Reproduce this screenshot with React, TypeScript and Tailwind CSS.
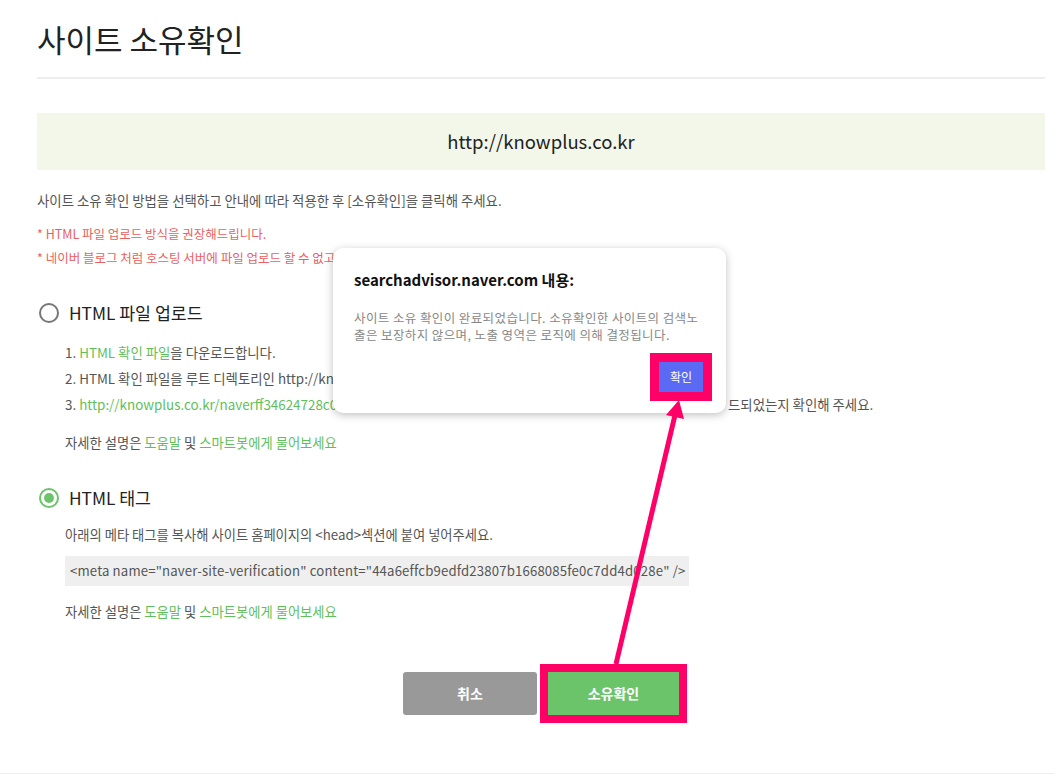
const font = { fontFamily: '"Noto Sans CJK KR", "Noto Sans", sans-serif' };

const Radio = ({ checked }: { checked?: boolean }) =>
  checked ? (
    <span className="ml-[2px] flex h-[20px] w-[20px] items-center justify-center rounded-full border-2 border-[#6cc46a]">
      <span className="h-[10px] w-[10px] rounded-full bg-[#6cc46a]" />
    </span>
  ) : (
    <span className="ml-[2px] h-[20px] w-[20px] rounded-full border-2 border-[#777]" />
  );

const HelpLine = () => (
  <p className="text-[13.3px] leading-[20px] text-[#555]">
    자세한 설명은 <span className="text-[#5fbf5a]">도움말</span> 및{" "}
    <span className="text-[#5fbf5a]">스마트봇에게 물어보세요</span>
  </p>
);

export default function App() {
  return (
    <div
      className="relative h-[774px] w-[1054px] overflow-hidden border-b border-[#eee] bg-white pl-[37px] pr-[9px]"
      style={font}
    >
      <h1 className="pt-[18px] text-[31px] leading-[42px] font-normal text-[#222]">사이트 소유확인</h1>
      <div className="mt-[17px] border-t-2 border-[#eee]" />

      <div className="mt-[34px] flex h-[57px] items-center justify-center bg-[#f3f7ea] text-[18.5px] text-[#222]">
        http://knowplus.co.kr
      </div>

      <p className="mt-[20px] text-[13.4px] leading-[20px] text-[#555]">
        사이트 소유 확인 방법을 선택하고 안내에 따라 적용한 후 [소유확인]을 클릭해 주세요.
      </p>
      <div className="mt-[12px] text-[12.5px] leading-[24px] text-[#ec5f5f]">
        <p>* HTML 파일 업로드 방식을 권장해드립니다.</p>
        <p>* 네이버 블로그 처럼 호스팅 서버에 파일 업로드 할 수 없고 HTML 태그 방식을 이용해 주세요.</p>
      </div>

      {/* HTML 파일 업로드 */}
      <div className="mt-[31px] flex h-[24px] items-center gap-[10px]">
        <Radio />
        <span className="text-[17.3px] text-[#222]">HTML 파일 업로드</span>
      </div>
      <div className="pl-[28px]">
        <ol className="mt-[14px] text-[13.4px] leading-[26px] text-[#555]">
          <li>
            1. <span className="text-[#5fbf5a]">HTML 확인 파일</span>을 다운로드합니다.
          </li>
          <li>2. HTML 확인 파일을 루트 디렉토리인 http://knowplus.co.kr 에 업로드합니다.</li>
          <li className="flex whitespace-nowrap">
            <span className="w-[663px] overflow-hidden">
              3. <span className="text-[#5fbf5a]">http://knowplus.co.kr/naverff34624728c0ab1e6e.html</span>에 접속하여 파일이 업로
            </span>
            <span>드되었는지 확인해 주세요.</span>
          </li>
        </ol>
        <div className="mt-[16px]">
          <HelpLine />
        </div>
      </div>

      {/* HTML 태그 */}
      <div className="mt-[33px] flex h-[24px] items-center gap-[10px]">
        <Radio checked />
        <span className="text-[17.3px] text-[#222]">HTML 태그</span>
      </div>
      <div className="pl-[28px]">
        <p className="mt-[15px] text-[13.3px] leading-[20px] text-[#555]">
          아래의 메타 태그를 복사해 사이트 홈페이지의 &lt;head&gt;섹션에 붙여 넣어주세요.
        </p>
        <div className="mt-[11px] flex h-[30px] w-[624px] items-center whitespace-nowrap bg-[#efefef] px-[5px] text-[13.2px] tracking-[0.15px] text-[#555]">
          &lt;meta name="naver-site-verification" content="44a6effcb9edfd23807b1668085fe0c7dd4d028e" /&gt;
        </div>
        <div className="mt-[16px]">
          <HelpLine />
        </div>
      </div>

      <div className="mt-[50px] flex justify-center gap-[11px]">
        <button className="h-[43px] w-[134px] rounded-[3px] bg-[#999] text-[14px] font-bold text-white">
          취소
        </button>
        <button className="h-[43px] w-[131px] bg-[#6cc46a] text-[14px] font-bold text-white outline-[8px] outline-solid outline-[#ff0066]">
          소유확인
        </button>
      </div>

      {/* alert dialog */}
      <div className="absolute left-[333px] top-[248px] h-[165px] w-[393px] rounded-[10px] bg-white shadow-[0_2px_8px_rgba(0,0,0,0.25)]">
        <div className="px-[21px] pt-[22px]">
          <p className="text-[15px] leading-[20px] font-bold text-[#111]">searchadvisor.naver.com 내용:</p>
          <p className="mt-[19px] break-all text-[12.5px] leading-[17px] tracking-[0.4px] text-[#888]">
            사이트 소유 확인이 완료되었습니다. 소유확인한 사이트의 검색노출은 보장하지 않으며, 노출 영역은 로직에 의해 결정됩니다.
          </p>
        </div>
        <button className="absolute left-[326px] top-[114px] h-[30px] w-[44px] bg-[#5b6af5] text-[12px] text-white outline-[9px] outline-solid outline-[#ff0066]">
          확인
        </button>
      </div>

      {/* annotation arrow */}
      <svg className="pointer-events-none absolute left-0 top-0" width="1054" height="774">
        <line x1="616" y1="664" x2="675" y2="415" stroke="#ff0066" strokeWidth="5" />
        <polygon points="679,400 684,419 666,415" fill="#ff0066" />
      </svg>
    </div>
  );
}
